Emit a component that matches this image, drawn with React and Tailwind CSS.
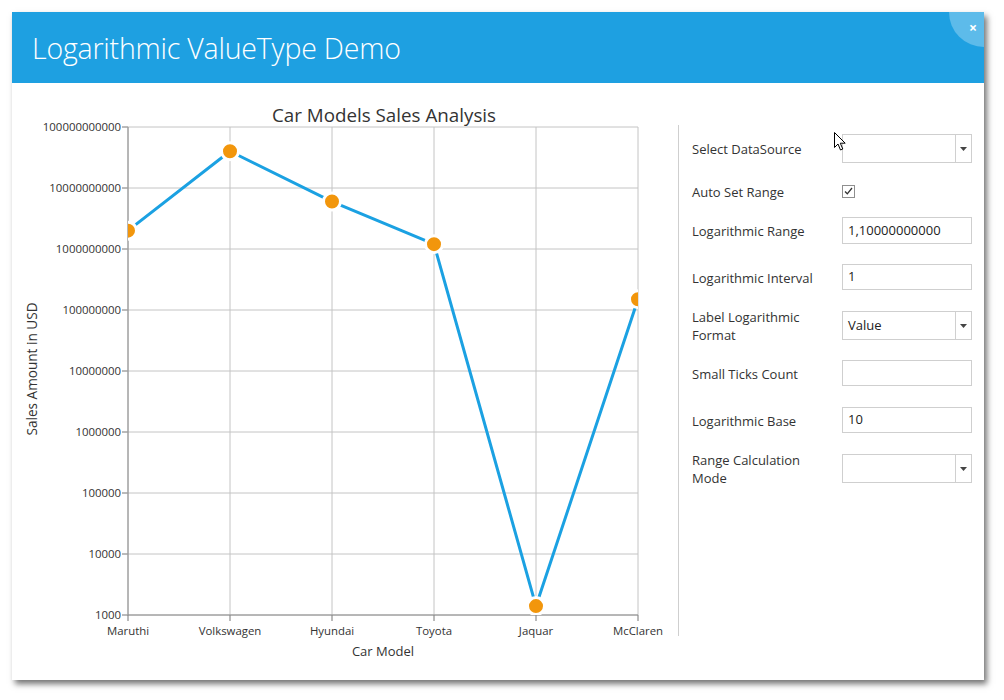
import React from "react";

const font = { fontFamily: '"Open Sans", "Noto Sans", sans-serif' };

const yTicks = [
  "100000000000",
  "10000000000",
  "1000000000",
  "100000000",
  "10000000",
  "1000000",
  "100000",
  "10000",
  "1000",
];

const cars = [
  { name: "Maruthi", value: 2e9 },
  { name: "Volkswagen", value: 4e10 },
  { name: "Hyundai", value: 6e9 },
  { name: "Toyota", value: 1.2e9 },
  { name: "Jaquar", value: 1400 },
  { name: "McClaren", value: 1.5e8 },
];

const left = 128;
const right = 638;
const top = 127;
const bottom = 615;
const step = (bottom - top) / 8;
const colW = (right - left) / 5;

function yOf(v) {
  return bottom - (Math.log10(v) - 3) * step;
}

function Chart() {
  const pts = cars.map((c, i) => [left + i * colW, yOf(c.value)]);
  return (
    <svg width="660" height="597" viewBox="12 83 660 597" style={font}>
      <defs>
        <clipPath id="plot">
          <rect x={left} y={top - 10} width={right - left} height={bottom - top + 10} />
        </clipPath>
      </defs>
      <text x="384" y="122" textAnchor="middle" fontSize="18.8" fill="#333">
        Car Models Sales Analysis
      </text>

      {yTicks.map((t, i) => {
        const y = top + i * step;
        return (
          <g key={t}>
            <line x1={left} x2={right} y1={y} y2={y} stroke="#c4c4c4" strokeWidth="1" />
            <line x1={left - 6} x2={left} y1={y} y2={y} stroke="#777" strokeWidth="1" />
            <text x={left - 7} y={y + 4} textAnchor="end" fontSize="11.4" fill="#333">
              {t}
            </text>
          </g>
        );
      })}

      {cars.map((c, i) => {
        const x = left + i * colW;
        return (
          <g key={c.name}>
            <line x1={x} x2={x} y1={top} y2={bottom} stroke="#c4c4c4" strokeWidth="1" />
            <line x1={x} x2={x} y1={bottom} y2={bottom + 6} stroke="#777" strokeWidth="1" />
            <text x={x} y={635} textAnchor="middle" fontSize="11.4" fill="#333">
              {c.name}
            </text>
          </g>
        );
      })}

      <line x1={left} x2={left} y1={top} y2={bottom} stroke="#8c8c8c" strokeWidth="1" />
      <line x1={left} x2={right} y1={bottom} y2={bottom} stroke="#8c8c8c" strokeWidth="1" />

      <text x="383" y="656" textAnchor="middle" fontSize="13" fill="#333">
        Car Model
      </text>
      <text
        x="0"
        y="0"
        textAnchor="middle"
        fontSize="13.6"
        fill="#333"
        transform="translate(37 369) rotate(-90)"
      >
        Sales Amount in USD
      </text>

      <g clipPath="url(#plot)">
        <polyline
          points={pts.map((p) => p.join(",")).join(" ")}
          fill="none"
          stroke="#1ba1e2"
          strokeWidth="3"
          strokeLinejoin="round"
        />
        {pts.map((p, i) => (
          <circle key={i} cx={p[0]} cy={p[1]} r="8.5" fill="#f2960c" stroke="#fff" strokeWidth="3" />
        ))}
      </g>
    </svg>
  );
}

function Arrow() {
  return (
    <div className="w-[16px] h-full border-l border-[#d0d0d0] flex items-center justify-center">
      <svg width="7" height="4" viewBox="0 0 7 4">
        <path d="M0 0 L7 0 L3.5 4 Z" fill="#444" />
      </svg>
    </div>
  );
}

function Combo({ value }) {
  return (
    <div className="w-[130px] h-full border border-[#cfcfcf] bg-white flex items-center">
      <div className="flex-1 pl-[5px] text-[13px] text-[#222]">{value}</div>
      <Arrow />
    </div>
  );
}

function Input({ value }) {
  return (
    <div className="w-[130px] h-full border border-[#cfcfcf] bg-white flex items-center pl-[5px] text-[13px] text-[#222]">
      {value}
    </div>
  );
}

function Row({ label, children, cls }) {
  return (
    <div className={`flex items-center ${cls}`}>
      <div className="w-[150px] text-[13px] leading-[18px] text-[#333] whitespace-nowrap pt-[1px]">{label}</div>
      {children}
    </div>
  );
}

export default function App() {
  return (
    <div className="w-[1004px] h-[700px] bg-white relative overflow-hidden" style={font}>
      <div className="absolute left-[12px] top-[12px] w-[972px] h-[668px] bg-white shadow-[3px_4px_6px_rgba(0,0,0,0.55)] overflow-hidden">
        <div className="h-[71px] bg-[#1ea0e1] flex items-center pl-[20px] relative">
          <div className="text-[28.5px] font-light text-white tracking-[-0.2px] mt-[1px]">
            Logarithmic ValueType Demo
          </div>
          <div className="absolute right-[-35px] top-[-35px] w-[70px] h-[70px] rounded-full bg-[#5dbbea]" />
          <div className="absolute right-[7px] top-[5px] text-white text-[14px] font-bold">×</div>
        </div>

        <div className="flex">
          <Chart />
          <div className="ml-[6px] mt-[42px] h-[511px] border-l border-[#cfcfcf]" />
          <div className="pl-[13px] pt-[51px] flex flex-col">
            <Row label="Select DataSource" cls="h-[29px]">
              <Combo value="" />
            </Row>
            <Row label="Auto Set Range" cls="mt-[14px] h-[28px]">
              <div className="w-[13px] h-[13px] border border-[#8f8f8f] bg-white flex items-center justify-center">
                <svg width="9" height="8" viewBox="0 0 9 8">
                  <path d="M1 4.5 L3.3 6.8 L8 1" fill="none" stroke="#333" strokeWidth="1.3" />
                </svg>
              </div>
            </Row>
            <Row label="Logarithmic Range" cls="mt-[12px] h-[27px]">
              <Input value="1,10000000000" />
            </Row>
            <Row label="Logarithmic Interval" cls="mt-[20px] h-[26px]">
              <Input value="1" />
            </Row>
            <Row
              label={
                <>
                  Label Logarithmic
                  <br />
                  Format
                </>
              }
              cls="mt-[21px] h-[29px]"
            >
              <Combo value="Value" />
            </Row>
            <Row label="Small Ticks Count" cls="mt-[20px] h-[26px]">
              <Input value="" />
            </Row>
            <Row label="Logarithmic Base" cls="mt-[21px] h-[26px]">
              <Input value="10" />
            </Row>
            <Row
              label={
                <>
                  Range Calculation
                  <br />
                  Mode
                </>
              }
              cls="mt-[21px] h-[29px]"
            >
              <Combo value="" />
            </Row>
          </div>
        </div>
      </div>

      <svg className="absolute left-[834px] top-[132px]" width="13" height="20" viewBox="0 0 13 20">
        <path
          d="M0.5 0.5 L0.5 15.5 L4 12 L6.5 18 L8.8 17 L6.3 11.2 L11.2 11.2 Z"
          fill="#fff"
          stroke="#000"
          strokeWidth="1"
          strokeLinejoin="round"
        />
      </svg>
    </div>
  );
}
